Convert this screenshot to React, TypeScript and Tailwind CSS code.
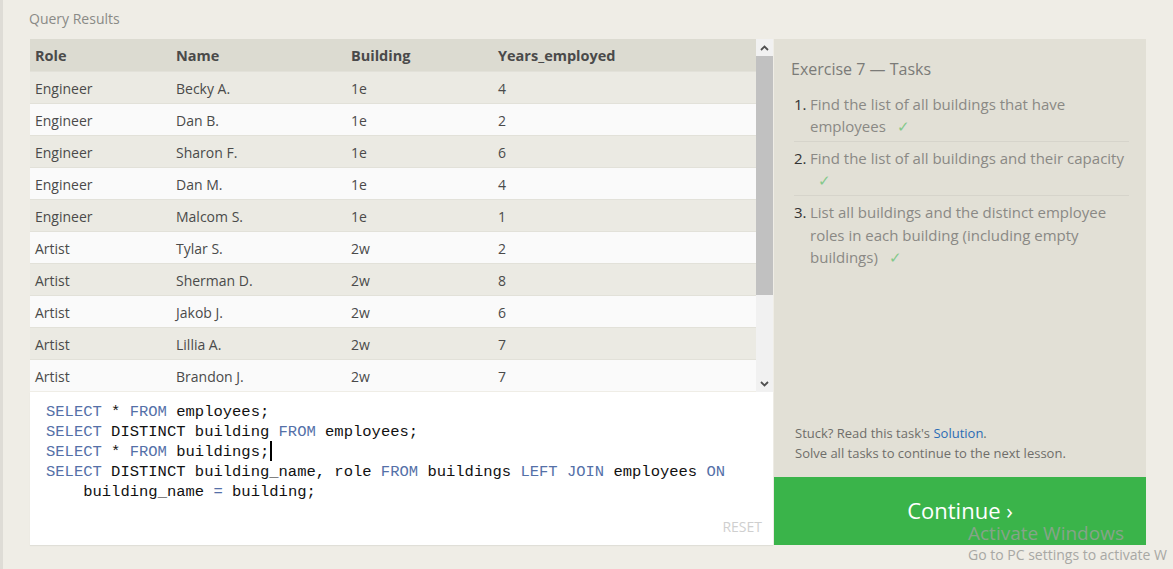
import React from 'react';

const rows = [
  ['Engineer', 'Becky A.', '1e', '4'],
  ['Engineer', 'Dan B.', '1e', '2'],
  ['Engineer', 'Sharon F.', '1e', '6'],
  ['Engineer', 'Dan M.', '1e', '4'],
  ['Engineer', 'Malcom S.', '1e', '1'],
  ['Artist', 'Tylar S.', '2w', '2'],
  ['Artist', 'Sherman D.', '2w', '8'],
  ['Artist', 'Jakob J.', '2w', '6'],
  ['Artist', 'Lillia A.', '2w', '7'],
  ['Artist', 'Brandon J.', '2w', '7'],
];

const Kw = ({ children }: { children: React.ReactNode }) => (
  <span className="text-[#5470a8]">{children}</span>
);

const Check = () => <span className="ml-[11px] text-[#84c98b]">✓</span>;

const App: React.FC = () => {
  return (
    <div className="relative h-[569px] w-[1173px] overflow-hidden border-l-[3px] border-[#dedcd6] bg-[#efede6] font-['Open_Sans',sans-serif]">
      <div className="flex pl-[27px]">
        {/* Left column: results + editor */}
        <div className="w-[743px]">
          <div className="pt-[9px] pb-[10px] text-[14px] leading-[20px] text-[#8a8a86] -ml-[1px]">Query Results</div>

          <div className="flex h-[353px]">
            <div className="flex-1 overflow-hidden">
              <div className="flex h-[32px] items-center bg-[#dcdbd1] pt-[2px] text-[14.5px] font-bold text-[#4a4a4a]">
                <div className="w-[141px] pl-[5px]">Role</div>
                <div className="w-[175px] pl-[5px]">Name</div>
                <div className="w-[147px] pl-[5px]">Building</div>
                <div className="flex-1 pl-[5px]">Years_employed</div>
              </div>
              {rows.map((r, i) => (
                <div
                  key={i}
                  className={`flex h-[32px] items-center border-t border-[#e2e1d9] pt-[2px] text-[14px] text-[#4a4a4a] ${i % 2 === 0 ? 'bg-[#ebeae3]' : 'bg-[#fafafa]'}`}
                >
                  <div className="w-[141px] pl-[5px]">{r[0]}</div>
                  <div className="w-[175px] pl-[5px]">{r[1]}</div>
                  <div className="w-[147px] pl-[5px]">{r[2]}</div>
                  <div className="flex-1 pl-[5px]">{r[3]}</div>
                </div>
              ))}
            </div>
            {/* scrollbar */}
            <div className="flex w-[17px] flex-col bg-[#f1f1f1]">
              <div className="flex h-[17px] items-center justify-center">
                <svg width="9" height="6" viewBox="0 0 9 6"><path d="M1 5 L4.5 1.5 L8 5" stroke="#505050" strokeWidth="1.8" fill="none" /></svg>
              </div>
              <div className="h-[239px] bg-[#c1c1c1]" />
              <div className="flex-1" />
              <div className="flex h-[17px] items-center justify-center">
                <svg width="9" height="6" viewBox="0 0 9 6"><path d="M1 1 L4.5 4.5 L8 1" stroke="#505050" strokeWidth="1.8" fill="none" /></svg>
              </div>
            </div>
          </div>

          {/* editor */}
          <div className="relative h-[153px] bg-white pt-[10px] pl-[16px] shadow-[0_1px_1px_rgba(0,0,0,0.06)]">
            <pre className="font-['Liberation_Mono',monospace] text-[15.5px] leading-[20px] text-[#111]">
              <div><Kw>SELECT</Kw> * <Kw>FROM</Kw> employees;</div>
              <div><Kw>SELECT</Kw> DISTINCT building <Kw>FROM</Kw> employees;</div>
              <div>
                <Kw>SELECT</Kw> * <Kw>FROM</Kw> buildings;
                <span className="relative">
                  <span className="absolute left-[1px] top-[-2px] h-[20px] w-[1.5px] bg-black" />
                </span>
              </div>
              <div><Kw>SELECT</Kw> DISTINCT building_name, role <Kw>FROM</Kw> buildings <Kw>LEFT JOIN</Kw> employees <Kw>ON</Kw></div>
              <div>{'    '}building_name <Kw>=</Kw> building;</div>
            </pre>
            <div className="absolute right-[11px] bottom-[8px] text-[14px] text-[#cfcfcf]">RESET</div>
          </div>
        </div>

        {/* Right column: tasks */}
        <div className="mt-[39px] ml-[1px] flex h-[506px] w-[372px] flex-col bg-[#e2e0d6]">
          <div className="flex-1 px-[17px] pt-[18px]">
            <div className="text-[16px] leading-[24px] text-[#7b7b78]">Exercise 7 — Tasks</div>
            <ol className="mt-[12px] text-[15px] leading-[22px] text-[#8a8985]">
              <li className="flex border-b border-[#d6d4cb] pb-[4px] ml-[3px]">
                <span className="w-[16px] text-[#333]">1.</span>
                <span className="flex-1">Find the list of all buildings that have employees<Check /></span>
              </li>
              <li className="flex border-b border-[#d6d4cb] pt-[5px] pb-[4px] ml-[3px]">
                <span className="w-[16px] text-[#333]">2.</span>
                <span className="flex-1">Find the list of all buildings and their capacity <span className="ml-[8px] text-[#84c98b]">✓</span></span>
              </li>
              <li className="flex pt-[5px] ml-[3px] leading-[22.5px]">
                <span className="w-[16px] text-[#333]">3.</span>
                <span className="flex-1">List all buildings and the distinct employee roles in each building (including empty buildings)<Check /></span>
              </li>
            </ol>
          </div>
          <div className="px-[21px] pb-[14px] text-[13px] leading-[20px] text-[#6f6e6a]">
            <div>Stuck? Read this task's <span className="text-[#2b6cb5]">Solution</span>.</div>
            <div>Solve all tasks to continue to the next lesson.</div>
          </div>
          <div className="flex h-[68px] items-center justify-center bg-[#3ab44a] pb-[2px] text-[22px] text-white">
            Continue ›
          </div>
        </div>
      </div>

      {/* OS watermark overlay */}
      <div className="pointer-events-none absolute left-[965px] top-[524px] font-['Open_Sans',sans-serif] leading-none">
        <div className="text-[19px] text-[#9aa09a]/80">Activate Windows</div>
        <div className="mt-[5px] whitespace-nowrap text-[14px] text-[#a8a8a4]">Go to PC settings to activate W</div>
      </div>
    </div>
  );
};

export default App;
